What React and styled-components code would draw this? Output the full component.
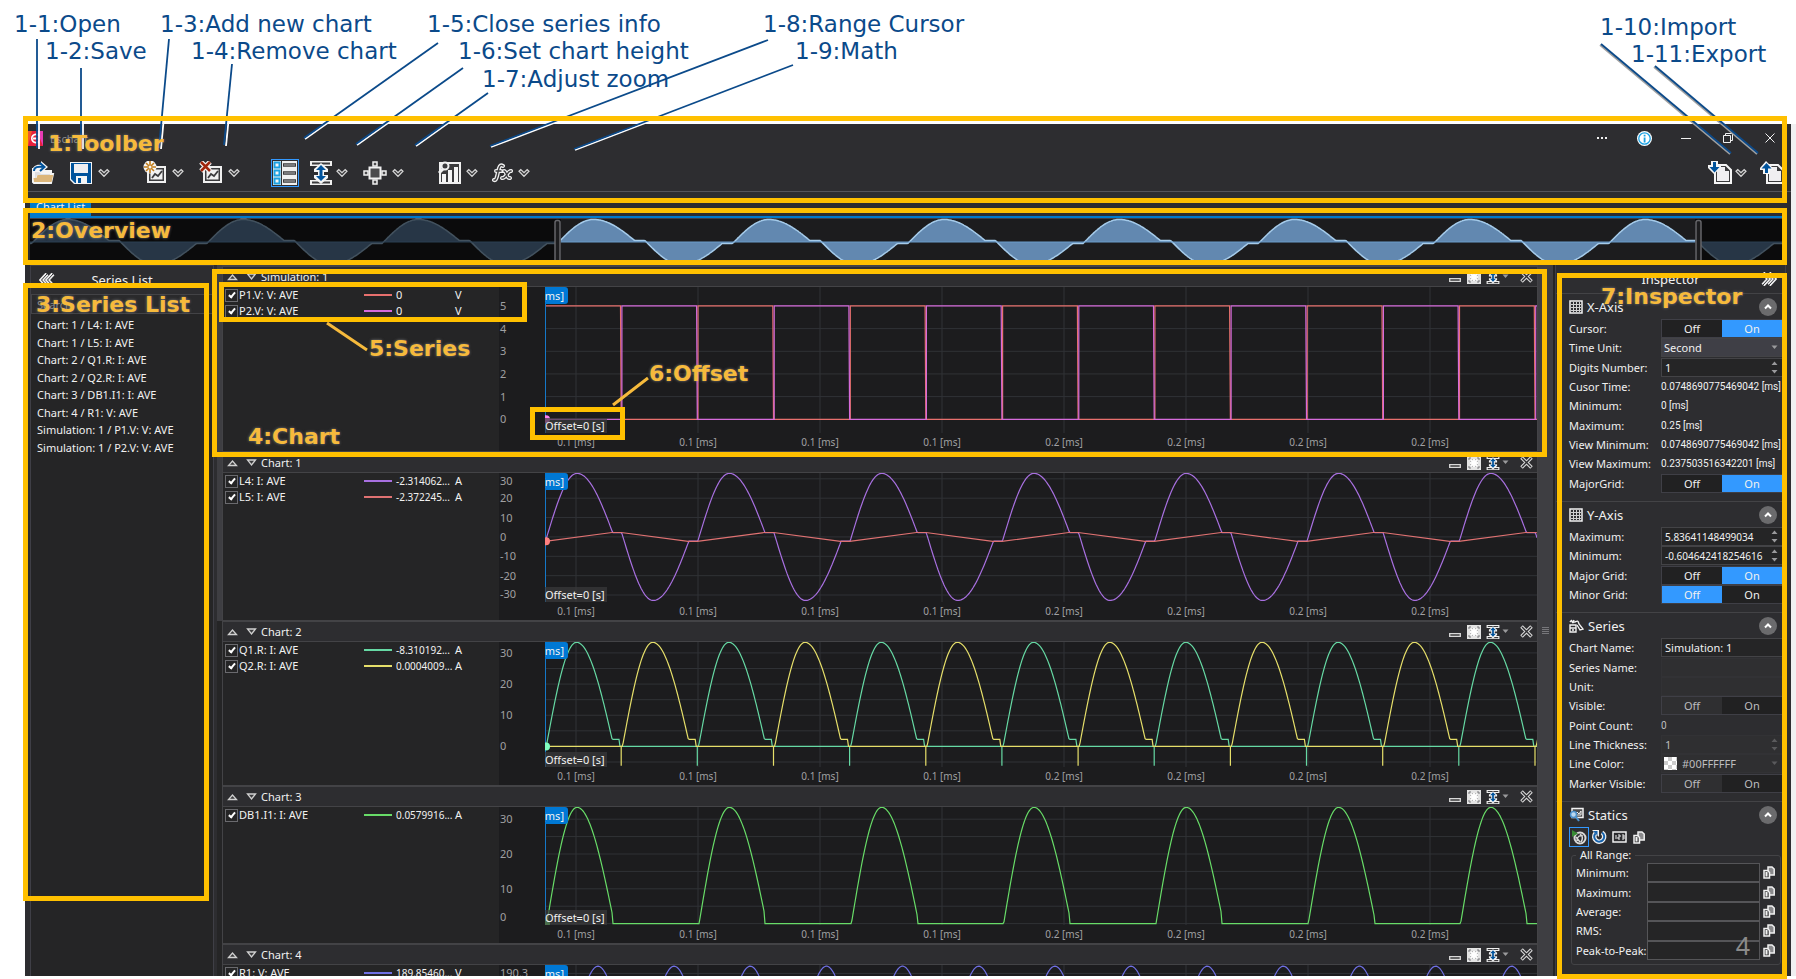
import { useId } from 'react';
import styled, { createGlobalStyle } from 'styled-components';

const uiFont = "'Noto Sans', 'Open Sans', sans-serif";
const noteFont = "'DejaVu Sans', 'Noto Sans', sans-serif";

const GlobalStyle = createGlobalStyle`
  * {
    box-sizing: border-box;
  }

  body {
    margin: 0;
    background: #fff;
    font-family: ${uiFont};
    font-size: 11px;
    color: #f1f1f1;
  }

  button, input, select {
    font: inherit;
    color: inherit;
  }
`;

const Page = styled.div`
  position: relative;
  height: 100vh;
  min-height: 600px;
  padding: 124px 5px 3px 25px;
  overflow: hidden;
`;

const AppWindow = styled.div`
  display: flex;
  flex-direction: column;
  height: 100%;
  background: #2d2d30;
  box-shadow: 5px 0 0 #f0f0f1;
`;

/* ---------- title bar and toolbar ---------- */

const TitleBar = styled.header`
  display: flex;
  align-items: center;
  height: 28px;
  flex: none;
  padding-left: 3px;
`;

const AppTitle = styled.span`
  margin-left: 7px;
  color: #8a8a8c;
`;

const CaptionButtons = styled.div`
  display: flex;
  margin-left: auto;
`;

const CaptionButton = styled.button`
  display: grid;
  place-items: center;
  width: 42px;
  height: 28px;
  padding: 0;
  border: none;
  background: none;
`;

const Toolbar = styled.div`
  display: flex;
  align-items: center;
  gap: 28px;
  height: 40px;
  flex: none;
  padding: 3px 5px 0 4px;
  border-bottom: 1px solid #55555a;
`;

const ToolGroup = styled.div`
  display: flex;
  align-items: center;
  gap: ${props => props.$gap || 10}px;
  margin-left: ${props => (props.$end ? 'auto' : '0')};
`;

const Tool = styled.div`
  display: flex;
  align-items: center;
`;

const ToolButton = styled.button`
  display: grid;
  place-items: center;
  width: ${props => (props.$slim ? 24 : 28)}px;
  height: 28px;
  padding: 0;
  border: ${props => (props.$active ? '1px solid #3399ff' : 'none')};
  background: none;
`;

const DropButton = styled.button`
  display: grid;
  place-items: center;
  width: 18px;
  height: 28px;
  padding: 0;
  border: none;
  background: none;
`;

const TabStrip = styled.div`
  display: flex;
  align-items: flex-end;
  height: 26px;
  flex: none;
  margin: 0 6px 0 5px;
  border-bottom: 2px solid #007acc;
`;

const Tab = styled.button`
  height: 18px;
  padding: 0 6px;
  border: none;
  background: #007acc;
  line-height: 18px;
`;

const OverviewStrip = styled.div`
  height: 47px;
  flex: none;
  margin: 0 6px 0 5px;

  svg {
    display: block;
    width: 100%;
    height: 100%;
  }
`;

/* ---------- main columns ---------- */

const Main = styled.main`
  display: grid;
  grid-template-columns: 184px 8px minmax(0, 1fr) 15px 2px 231px;
  flex: 1;
  min-height: 0;
  padding: 0 5px;
`;

const ListPanel = styled.aside`
  display: flex;
  flex-direction: column;
  border: 1px solid #3f3f46;
  border-bottom: none;
  background: #252526;
`;

const PanelHeader = styled.div`
  display: grid;
  grid-template-columns: 32px 1fr 32px;
  align-items: center;
  height: 28px;
  flex: none;
  background: #2d2d30;
  font-size: 13px;
  text-align: center;
`;

const PlainButton = styled.button`
  display: grid;
  place-items: center;
  padding: 0;
  border: none;
  background: none;
`;

const SearchBox = styled.input`
  height: 20px;
  flex: none;
  padding: 0 5px;
  border: 1px solid #434346;
  background: #2a2a2c;

  &::placeholder {
    color: #8a8a8c;
  }
`;

const SeriesItems = styled.ul`
  display: grid;
  grid-auto-rows: 1fr;
  height: 142px;
  margin: 0;
  padding: 2px 0 0 6px;
  list-style: none;
  align-items: center;
`;

const LeftTrack = styled.div`
  margin: 0 0 0 3px;
  background: linear-gradient(#3e3e42 50%, #252526 50%);
`;

const RightTrack = styled.div`
  display: grid;
  place-items: center;
  padding-top: 20px;
  background: #3e3e42;
`;

const Gutter = styled.div`
  background: #252526;
`;

/* ---------- charts ---------- */

const ChartStack = styled.section`
  overflow: hidden;
  border: solid #434346;
  border-width: 0 1px;
`;

const ChartHeader = styled.div`
  display: flex;
  align-items: center;
  height: 22px;
  border-top: 2px solid #434346;
  border-bottom: 1px solid #434346;
  background: #2d2d30;
`;

const HeaderButton = styled(PlainButton)`
  width: ${props => props.$width || 19}px;
  height: 18px;
`;

const CloseButton = styled(PlainButton)`
  justify-items: end;
  width: 28px;
  height: 18px;
  padding-right: 4px;
`;

const ChartName = styled.span`
  flex: 1;
`;

const ChartBody = styled.div`
  display: grid;
  grid-template-columns: 276px 46px minmax(0, 1fr);
  height: ${props => props.$height}px;
  background: #1c1c1e;
`;

const Legend = styled.div`
  padding: 0 0 0 2px;
  background: #252526;
`;

const LegendRow = styled.label`
  display: grid;
  grid-template-columns: 14px 125px 28px 63px 1fr;
  align-items: center;
  height: 16px;
  line-height: 16px;
`;

const LegendName = styled.span`
  white-space: nowrap;
`;

const LegendValue = styled.span`
  padding-left: 4px;
  font-size: ${props => (props.$long ? 10 : 11)}px;
  white-space: nowrap;
`;

const Swatch = styled.span`
  height: 2px;
  background: ${props => props.$color};
`;

const Check = styled.input`
  appearance: none;
  display: grid;
  place-content: center;
  width: 13px;
  height: 13px;
  margin: 0;
  border: 1px solid #6a6a6e;
  background: #252526;

  &:checked::after {
    content: '';
    width: 2px;
    height: 5px;
    margin-bottom: 2px;
    border: solid #fff;
    border-width: 0 2px 2px 0;
    transform: rotate(40deg);
  }
`;

const YAxis = styled.div`
  position: relative;
  color: #a0a0a2;
`;

const YTick = styled.span`
  position: absolute;
  left: 1px;
  line-height: 16px;
  transform: translateY(-50%);
`;

const PlotColumn = styled.div`
  display: grid;
  grid-template-rows: minmax(0, 1fr) 18px;
`;

const Plot = styled.div`
  position: relative;
  min-height: 0;

  svg {
    display: block;
    width: 100%;
    height: 100%;
  }

  path, line {
    vector-effect: non-scaling-stroke;
  }
`;

const XAxis = styled.div`
  position: relative;
  color: #a0a0a2;
`;

const XTick = styled.span`
  position: absolute;
  top: 1px;
  font-size: 10px;
  line-height: 16px;
  white-space: nowrap;
  transform: translateX(-50%);
`;

const CursorBadge = styled.span`
  position: absolute;
  top: 0;
  left: 0;
  display: flex;
  justify-content: flex-end;
  width: 23px;
  height: 17px;
  padding-right: 4px;
  overflow: hidden;
  border-radius: 0 3px 3px 0;
  background: #0078d4;
  line-height: 17px;
`;

const OffsetLabel = styled.span`
  position: absolute;
  bottom: 0;
  left: 0;
  padding-right: 2px;
  background: rgba(58, 58, 60, 0.7);
  line-height: 15px;
`;

/* ---------- inspector ---------- */

const Inspector = styled.aside`
  display: flex;
  flex-direction: column;
  border: solid #3f3f46;
  border-width: 0 1px;
  overflow: hidden;
`;

const Section = styled.section`
  padding: 0 2px 8px 13px;
  border-top: 1px solid #434346;
`;

const SectionTitle = styled.div`
  display: flex;
  align-items: center;
  gap: 4px;
  height: 25px;
  padding-right: 6px;

  h2 {
    flex: 1;
    margin: 0;
    font-size: 13px;
    font-weight: 400;
  }
`;

const Fields = styled.div`
  display: grid;
  grid-auto-rows: 1fr;
  height: ${props => props.$height}px;
`;

const Field = styled.div`
  display: grid;
  grid-template-columns: 92px minmax(0, 1fr);
  align-items: center;
  white-space: nowrap;
`;

const Readout = styled.output`
  font-family: Roboto, ${uiFont};
  font-size: 10px;
  color: ${props => (props.$dim ? '#bdbdbf' : '#f1f1f1')};
`;

const Toggle = styled.div`
  display: grid;
  grid-template-columns: 1fr 1fr;
  height: 19px;
  border: 1px solid #3f3f46;
`;

const ToggleButton = styled.button`
  padding: 0;
  border: none;
  background: ${props => (props.$on ? '#3399ff' : props.$muted ? '#2f2f31' : '#212122')};

  &:disabled {
    color: #bdbdbf;
  }
`;

const Editor = styled.div`
  display: flex;
  align-items: center;
  height: 19px;
  padding-right: 4px;
  border: 1px solid ${props => (props.$off ? '#323235' : '#434346')};
  background: ${props => (props.$off ? '#2f2f31' : props.$raised ? '#3f3f46' : '#252526')};
`;

const TextBox = styled.input`
  flex: 1;
  min-width: 0;
  height: 17px;
  padding: 0 3px;
  border: none;
  outline: none;
  background: none;
  font-size: ${props => (props.$digits ? 10 : 11)}px;

  &:disabled {
    color: #bdbdbf;
  }
`;

const Select = styled.select`
  appearance: none;
  flex: 1;
  min-width: 0;
  padding: 0 2px;
  border: none;
  background: none;

  &:disabled {
    color: #bdbdbf;
    opacity: 1;
  }
`;

const ColorChip = styled.span`
  width: 13px;
  height: 13px;
  margin: 0 3px 0 2px;
  background: conic-gradient(#ccc 25%, #fff 0 50%, #ccc 0 75%, #fff 0) 0 0 / 8px 8px;
`;

const StatTools = styled.div`
  display: flex;
  height: 19px;
`;

const StatButton = styled(PlainButton)`
  width: 20px;
  height: 20px;
  border: ${props => (props.$active ? '1px solid #3399ff' : 'none')};
`;

const RangeBox = styled.fieldset`
  margin: 1px 2px 0 2px;
  padding: 0 2px 4px 4px;
  border: 1px solid #434346;
  border-radius: 3px;

  legend {
    height: 16px;
    padding: 0 4px;
    line-height: 16px;
  }
`;

const StatRow = styled.div`
  display: grid;
  grid-template-columns: 71px minmax(0, 1fr) 18px;
  align-items: stretch;
  white-space: nowrap;

  label {
    align-self: center;
  }
`;

const StatBox = styled.input`
  width: 100%;
  min-width: 0;
  height: 100%;
  border: 1px solid #555558;
  background: #252526;
`;

/* ---------- annotations laid over the window ---------- */

const NoteLayer = styled.div`
  position: absolute;
  inset: 0;
  pointer-events: none;
`;

const NoteLines = styled.svg`
  position: absolute;
  top: 0;
  left: 0;
`;

const Frame = styled.div`
  position: absolute;
  border: 5px solid #ffc000;
`;

const Note = styled.span`
  position: absolute;
  color: #0b4a8a;
  font-family: ${noteFont};
  font-size: 23px;
  line-height: 30px;
  white-space: nowrap;
`;

const FrameNote = styled(Note)`
  color: #f6ba3c;
  font-size: 22px;
  font-weight: 700;
  text-shadow: 0 0 3px rgba(160, 160, 160, 0.7);
`;

const PageNumber = styled.span`
  position: absolute;
  color: #8b8b8b;
  font-size: 25px;
  line-height: 30px;
`;

/* ---------- icons ---------- */

const Chevron = () => (
  <svg width="12" height="10" viewBox="0 0 12 10">
    <path d="M1 3.200 2.800 1.500 6 4.700l3.200-3.200L11 3.200 6 8.500z" fill="#3b3b3d" stroke="#d8d8d8" strokeWidth="1.200" />
  </svg>
);

const AppLogo = () => (
  <svg width="15" height="15" viewBox="0 0 15 15">
    <rect width="15" height="15" fill="#e8203c" />
    <path d="M9 0h6v15z" fill="#e63bb4" />
    <path d="M0 0h4L0 15z" fill="#f0582c" />
    <path d="M10.500 4.500a4 4 0 1 0 0 6M5 7.500h5" stroke="#fff" strokeWidth="1.800" fill="none" />
  </svg>
);

const OpenIcon = () => (
  <svg width="24" height="24" viewBox="0 0 24 24">
    <path d="M2 21V8h7l2 2h9v3h2l-2 9H3z" fill="#f5f5f5" stroke="#f5f5f5" strokeWidth="2" />
    <path d="M4 19V11h4l2 2h9v1H6z" fill="#dedee0" />
    <path d="m3 21-.500-4h3l1-3H22v1l-1.500 6z" fill="#dcb67a" />
    <path d="M1 11c0-6 5-8 9-7V0l7 6-7 6V8C7 7 4 8 3 11z" fill="#f5f5f5" />
    <path d="M3 10C3 6 7 5 13 6m-4-4 4.500 4L9 10" stroke="#00539c" strokeWidth="2" fill="none" />
  </svg>
);

const SaveIcon = () => (
  <svg width="24" height="24" viewBox="0 0 24 24">
    <path d="M1 1h22v22H5l-4-4z" fill="#f5f5f5" />
    <path d="M2 2h20v20H6l-4-4z" fill="#00539c" />
    <path d="M5 3h14v9H5z" fill="#f0eff1" />
    <path d="M7 15h11v7H7z" fill="#f5f5f5" />
    <path d="M9 17h3v5H9z" fill="#00539c" />
  </svg>
);

const PictureFrame = () => (
  <>
    <path d="M4 5h19v17H4z" fill="#f0f0f0" />
    <path d="M6 7h15v13H6z" fill="#3b3b3d" />
    <path d="M7.500 8.500h12v10h-12z" fill="#f0f0f0" />
    <path d="m9 17 3-4 3 2 4-5" stroke="#3b3b3d" strokeWidth="1.800" fill="none" />
  </>
);

const AddChartIcon = () => (
  <svg width="24" height="24" viewBox="0 0 24 24">
    <PictureFrame />
    <circle cx="7" cy="6" r="6.500" fill="#f5f5f5" />
    <path d="M7 0v12M1 6h12M3 2l8 8M11 2l-8 8" stroke="#c27d1a" strokeWidth="1.600" />
    <circle cx="7" cy="6" r="1.500" fill="#f5f5f5" />
  </svg>
);

const RemoveChartIcon = () => (
  <svg width="24" height="24" viewBox="0 0 24 24">
    <PictureFrame />
    <path d="m2 1 9 9M11 1l-9 9" stroke="#f5f5f5" strokeWidth="5" />
    <path d="m2 1 9 9M11 1l-9 9" stroke="#a1260d" strokeWidth="2.500" />
  </svg>
);

const ListIcon = () => (
  <svg width="24" height="24" viewBox="0 0 24 24">
    <path d="M0 0h8v24H0z" fill="#f0f0f0" />
    {[1, 9, 17].map(y => (
      <g key={y}>
        <rect x="1.500" y={y + 0.5} width="5" height="5" fill="#f5f5f5" stroke="#1ba1e2" strokeWidth="2" />
        <rect x="9" y={y - 1} width="15" height="8" fill="#f0f0f0" />
        <path d={`M10 ${y + 3}h13`} stroke="#3b3b3d" strokeWidth="3.500" />
        <path d={`M11 ${y + 3}h11`} stroke="#b8b8ba" strokeWidth="1" />
      </g>
    ))}
  </svg>
);

const HeightIcon = ({ size = 24 }) => (
  <svg width={size} height={size} viewBox="0 0 24 24">
    <path d="M1 0h22v5H1zM1 19h22v5H1z" fill="#f0f0f0" />
    <path d="M3 2.500h18M3 21.500h18" stroke="#3b3b3d" strokeWidth="2" />
    <path d="M12 2 5 8v3h4v3H5v3l7 6 7-6v-3h-4v-3h4V8z" fill="#f5f5f5" />
    <path d="m12 4-5 5h3.500v6H7l5 5 5-5h-3.500V9H17z" fill="#00539c" />
  </svg>
);

const ZoomIcon = () => (
  <svg width="24" height="24" viewBox="0 0 24 24">
    <rect x="6.500" y="6.500" width="11" height="11" fill="#4b4b4d" stroke="#f0f0f0" strokeWidth="2" />
    <path
      d="M10 1h4v4h-4zM10 19h4v4h-4zM1 10h4v4H1zM19 10h4v4h-4z"
      fill="#4b4b4d"
      stroke="#f0f0f0"
      strokeWidth="1.500"
    />
  </svg>
);

const RangeIcon = () => (
  <svg width="24" height="24" viewBox="0 0 24 24">
    <path d="M3 2h20v20H3z" fill="#3b3b3d" stroke="#f0f0f0" strokeWidth="2" />
    <path d="M5 13h4v8H5zM11 9h4v12h-4zM17 6h4v15h-4z" fill="#f5f5f5" />
    <circle cx="8" cy="5" r="3.500" fill="#3b3b3d" stroke="#f0f0f0" strokeWidth="2" />
    <path d="m6 8-4 4" stroke="#f0f0f0" strokeWidth="3" />
  </svg>
);

const FxIcon = () => (
  <svg width="22" height="20" viewBox="0 0 22 20" fill="none" strokeLinecap="round">
    <g stroke="#f0f0f0" strokeWidth="4">
      <path d="M11 3c-3-2-4 1-5 6s-2 9-4 8M4 8h5M12 8c3 0 2 8 6 7M19 8c-3-1-5 8-9 7" />
    </g>
    <path
      d="M11 3c-3-2-4 1-5 6s-2 9-4 8M4 8h5M12 8c3 0 2 8 6 7M19 8c-3-1-5 8-9 7"
      stroke="#3b3b3d"
      strokeWidth="1.400"
    />
  </svg>
);

const DocIcon = ({ up }) => (
  <svg width="24" height="24" viewBox="0 0 24 24">
    <path d="M7 4h11l5 5v13H7z" fill="#3b3b3d" stroke="#f5f5f5" strokeWidth="2" />
    <path d="M9 6h8v4h4v10H9z" fill="#f0eff1" />
    <path d={up ? 'M6 0 0 7v2h3v4h7V9h3V7z' : 'M6 13 0 7V4h3V0h7v4h3v3z'} fill="#f5f5f5" />
    <path d={up ? 'm6.500 2-5 5.500H5V12h3V7.500h3.500z' : 'm6.500 11.500-5-5.500H5V1h3v5h3.500z'} fill="#00539c" />
  </svg>
);

const DoubleArrow = ({ flip }) => (
  <svg width="16" height="14" viewBox="0 0 16 14" fill="none">
    <g transform={flip ? 'matrix(-1 0 0 1 16 0)' : undefined}>
      <path d="M8 1 2.500 7 8 13M14 1 8.500 7 14 13" stroke="#f1f1f1" strokeWidth="4" />
      <path d="M8 1 2.500 7 8 13M14 1 8.500 7 14 13" stroke="#2d2d30" strokeWidth="1" />
    </g>
  </svg>
);

const Triangle = ({ down }) => (
  <svg width="11" height="8" viewBox="0 0 11 8">
    <path d={down ? 'M1.500 1h8l-4 5z' : 'M1.500 6.500h8l-4-4.500z'} fill="#3b3b3d" stroke="#d0d0d0" strokeWidth="1.300" />
  </svg>
);

const MinimiseIcon = () => (
  <svg width="12" height="12" viewBox="0 0 12 12">
    <path d="M.7 7.700h10.600v2.600H.7z" fill="#3b3b3d" stroke="#d8d8d8" strokeWidth="1.300" />
  </svg>
);

const FitIcon = () => (
  <svg width="14" height="14" viewBox="0 0 14 14">
    <path d="M0 0h14v14H0z" fill="#e4e4e4" />
    <path d="M2 4V2h2M10 2h2v2M12 10v2h-2M4 12H2v-2" stroke="#77777a" fill="none" />
    <path d="M7 3v8M3 7h8M4 4l6 6M10 4l-6 6" stroke="#fff" strokeWidth="1.600" />
    <path d="M5 3.500h.5M8.500 3.500H9M5 10.500h.5M8.500 10.500H9M3.500 5v.5M10.500 5v.5M3.500 8.500V9M10.500 8.500V9" stroke="#8a8a8c" />
  </svg>
);

const CloseIcon = () => (
  <svg width="13" height="13" viewBox="0 0 13 13">
    <path d="m1.500 1.500 10 10M11.500 1.500l-10 10" stroke="#d8d8d8" strokeWidth="3.600" />
    <path d="m2 2 9 9M11 2l-9 9" stroke="#2d2d30" strokeWidth="1.300" />
  </svg>
);

const GridIcon = () => (
  <svg width="14" height="14" viewBox="0 0 14 14" fill="none">
    <path d="M1 1h12v12H1z" stroke="#f1f1f1" strokeWidth="1.500" />
    <path d="M4.500 2v10M7.500 2v10M10.500 2v10M2 4.500h10M2 7.500h10M2 10.500h10" stroke="#d0d0d0" />
  </svg>
);

const SeriesIcon = () => (
  <svg width="15" height="14" viewBox="0 0 15 14" fill="none">
    <path d="M1 6h6v3H1zM1 9h6v4H1zM3 11h2" stroke="#f1f1f1" strokeWidth="1.400" />
    <path d="M1 3c2-3 3 1 5 0s3-2 4 2l4 5-3 1-3-5M2 1l2 3M5 1 4 4" stroke="#f1f1f1" strokeWidth="1.400" />
  </svg>
);

const StaticsIcon = () => (
  <svg width="15" height="15" viewBox="0 0 15 15" fill="none">
    <path d="M3 1.500h11v9H3z" fill="#4b4b4d" stroke="#f1f1f1" strokeWidth="1.500" />
    <path d="m6 8 2-3 2 2 2-3v4z" stroke="#f1f1f1" />
    <circle cx="4.500" cy="7.500" r="3" fill="#bcd7ee" stroke="#4a8fcc" strokeWidth="1.500" />
    <path d="m7 10 3 4" stroke="#4a8fcc" strokeWidth="2" />
  </svg>
);

const CollapseIcon = () => (
  <svg width="18" height="18" viewBox="0 0 18 18">
    <circle cx="9" cy="9" r="9" fill="#6b6b6d" />
    <path d="m6 10.500 3-3 3 3" stroke="#fff" strokeWidth="2" fill="none" />
  </svg>
);

const CopyIcon = () => (
  <svg width="12" height="13" viewBox="0 0 12 13" strokeWidth="1.500">
    <path d="M5 1h4l2.200 2v6H5z" fill="#8a8a8c" stroke="#f1f1f1" />
    <path d="M1 4.500h3.500l2 2V12H1z" fill="#3b3b3d" stroke="#f1f1f1" />
    <path d="M2.500 6h2v4.500h-2z" fill="#f1f1f1" />
  </svg>
);

const AutoIcon = () => (
  <svg width="16" height="16" viewBox="0 0 16 16" fill="none">
    <circle cx="9" cy="9" r="5.500" stroke="#d8d8d8" strokeWidth="2" />
    <path d="M6 12c0-5 3-6 6-5M9 5c3 2 3 5 1 8M5 8l4 5" stroke="#d8d8d8" strokeWidth="1.500" />
    <path d="m1 1 6 3.500L1 8z" fill="#388a34" />
  </svg>
);

const RefreshIcon = () => (
  <svg width="16" height="16" viewBox="0 0 16 16" fill="none">
    <path d="M11 3.500a5 5 0 1 1-6.500.8" stroke="#f1f1f1" strokeWidth="4.500" />
    <path d="M1 1h7v7z" fill="#f1f1f1" />
    <path d="M11 3.500a5 5 0 1 1-6.500.8" stroke="#1763ad" strokeWidth="2" />
    <path d="M2 2h4.500v4.500z" fill="#1763ad" />
  </svg>
);

const NumberIcon = () => (
  <svg width="15" height="12" viewBox="0 0 15 12" fill="none">
    <path d="M1 1h13v10H1z" stroke="#f1f1f1" strokeWidth="1.500" />
    <path d="M4 4v4M6 4h2v2H6v2h2M10 4h2v4h-2M10 6h2" stroke="#f1f1f1" />
  </svg>
);

const Spinner = ({ dim }) => (
  <svg width="7" height="13" viewBox="0 0 7 13" fill={dim ? '#5a5a5c' : '#9a9a9c'}>
    <path d="M.5 4h6l-3-3.500zM.5 9h6l-3 3.500z" />
  </svg>
);

const Caret = ({ dim }) => (
  <svg width="7" height="5" viewBox="0 0 7 5" fill={dim ? '#5a5a5c' : '#9a9a9c'}>
    <path d="M.5.5h6l-3 3.500z" />
  </svg>
);

/* ---------- signal data ---------- */

// One half cycle of the inductor current: a lobe and then a short flat part
function halfWave(u) {
  if (u < 0.414) return Math.cos(((0.414 - u) / 0.397) * (Math.PI / 2));
  if (u < 0.88) return Math.cos(((u - 0.414) / 0.489) * (Math.PI / 2));
  return 0.068;
}

function fullWave(t) {
  const p = ((t % 1) + 1) % 1;
  return p < 0.5 ? halfWave(p * 2) : -halfWave(p * 2 - 1);
}

const PLOT_WIDTH = 992;
const PERIOD = 152.3;
const HALF = PERIOD / 2;

const toPath = points => 'M' + points.map(([x, y]) => `${x.toFixed(1)} ${y.toFixed(1)}`).join('L');

function sample(fn, width = PLOT_WIDTH) {
  const points = [];
  for (let x = 0; x <= width; x += 1) points.push([x, fn(x)]);
  return points;
}

function square(phase) {
  const points = [];
  for (let i = 0; i <= 13; i += 1) {
    const high = (i + phase) % 2 === 0;
    const start = i * HALF + (high && i > 0 ? 0.7 : 0);
    points.push([start, high ? 5 : 0], [(i + 1) * HALF - (high ? 0.7 : -0.7), high ? 5 : 0]);
  }
  return points;
}

function triangle() {
  const points = [[0, -2.3]];
  for (let i = 0; i < 14; i += 1) {
    const v = i % 2 ? -2.3 : 2.3;
    points.push([i * HALF + 67, v], [(i + 1) * HALF, v]);
  }
  return points;
}

function pulsed(phase) {
  const points = [];
  for (let i = 0; i < 14; i += 1) {
    const x0 = i * HALF;
    if ((i + phase) % 2 === 0) {
      if (i > 0) points.push([x0, 0], [x0, -6.2], [x0, 0]);
      for (let s = 1; s < 75; s += 1) points.push([x0 + s, Math.max(0, 33.4 * halfWave(s / HALF))]);
      points.push([x0 + 75, 0]);
    } else {
      points.push([x0, 0], [x0 + HALF - 1, 0]);
    }
  }
  return points;
}

function rectified() {
  return sample(x => {
    const p = (x - 0.5) % PERIOD;
    return p < 67 && p > 0 ? Math.max(0, 33.4 * halfWave(p / HALF)) : 0;
  });
}

const range = (from, to, step) => {
  const out = [];
  for (let v = from; v <= to; v += step) out.push(v);
  return out;
};

const charts = [
  {
    name: 'Simulation: 1',
    height: 164,
    max: 5.836,
    min: -0.605,
    ticks: [5, 4, 3, 2, 1, 0],
    grid: range(0, 5, 1),
    marker: ['#ff80f0', 0],
    series: [
      { name: 'P1.V: V: AVE', value: '0', unit: 'V', color: '#e8706e', points: square(0) },
      { name: 'P2.V: V: AVE', value: '0', unit: 'V', color: '#d66bdc', points: square(1) },
    ],
  },
  {
    name: 'Chart: 1',
    height: 147,
    max: 33,
    min: -33.6,
    ticks: [30, 20, 10, 0, -10, -20, -30],
    grid: range(-30, 30, 10),
    marker: ['#ff8080', -2.3],
    series: [
      {
        name: 'L4: I: AVE',
        value: '-2.314062...',
        unit: 'A',
        color: '#a870e0',
        points: sample(x => 32.8 * fullWave((x - 0.5) / PERIOD)),
      },
      { name: 'L5: I: AVE', value: '-2.372245...', unit: 'A', color: '#e07272', points: triangle() },
    ],
  },
  {
    name: 'Chart: 2',
    height: 143,
    max: 33.5,
    min: -6.6,
    ticks: [30, 20, 10, 0],
    grid: range(-5, 30, 5),
    marker: ['#80ffc0', 0],
    series: [
      { name: 'Q1.R: I: AVE', value: '-8.310192...', unit: 'A', color: '#66d9a4', points: pulsed(0) },
      { name: 'Q2.R: I: AVE', value: '0.0004009...', unit: 'A', color: '#e6df6a', points: pulsed(1) },
    ],
  },
  {
    name: 'Chart: 3',
    height: 136,
    max: 33.5,
    min: -0.4,
    ticks: [30, 20, 10, 0],
    grid: range(0, 30, 5),
    marker: ['#6ee86e', 0],
    series: [{ name: 'DB1.I1: I: AVE', value: '0.0579916...', unit: 'A', color: '#68dc68', points: rectified() }],
  },
  {
    name: 'Chart: 4',
    height: 150,
    max: 191,
    min: 180,
    ticks: [190.3],
    grid: [190.3],
    marker: ['#8080ff', 180],
    series: [
      {
        name: 'R1: V: AVE',
        value: '189.85460...',
        unit: 'V',
        color: '#7070e4',
        points: sample(x => 187.6 + 3.3 * Math.cos(((x - 53) / HALF) * 2 * Math.PI)),
      },
    ],
  },
];

const xTicks = ['0.1', '0.1', '0.1', '0.1', '0.2', '0.2', '0.2', '0.2'].map((text, i) => ({
  text: `${text} [ms]`,
  x: 31 + i * 122,
}));

const seriesItems = [
  'Chart: 1 / L4: I: AVE',
  'Chart: 1 / L5: I: AVE',
  'Chart: 2 / Q1.R: I: AVE',
  'Chart: 2 / Q2.R: I: AVE',
  'Chart: 3 / DB1.I1: I: AVE',
  'Chart: 4 / R1: V: AVE',
  'Simulation: 1 / P1.V: V: AVE',
  'Simulation: 1 / P2.V: V: AVE',
];

/* ---------- components ---------- */

function ToolItem({ label, slim, active, drop, children }) {
  return (
    <Tool>
      <ToolButton type="button" aria-label={label} $slim={slim} $active={active}>
        {children}
      </ToolButton>
      {drop && (
        <DropButton type="button" aria-label={`${label} options`}>
          <Chevron />
        </DropButton>
      )}
    </Tool>
  );
}

function Overview() {
  const wave = toPath(sample(x => 24 - 22.5 * fullWave((x - 1.5) / 175.25), 1755));
  const area = `${wave}L1755 24L0 24Z`;
  return (
    <OverviewStrip>
      <svg viewBox="0 0 1755 47" preserveAspectRatio="none">
        <rect width="1755" height="47" fill="#1c1c1e" />
        <path d="M0 .5h1755" stroke="#3f3f46" />
        <path d={area} fill="#6288b0" />
        <path d={wave} fill="none" stroke="#a5cbea" strokeWidth="1.500" />
        <path d="M0 24h1755" stroke="#6a9cca" strokeWidth="1" />
        <path d="M0 1h531v46H0zM1665 1h90v46h-90z" fill="#000" fillOpacity="0.6" />
        {[525, 1666].map(x => (
          <rect key={x} x={x} y="2.500" width="5" height="50" rx="2" fill="#1c1c1e" stroke="#66666a" strokeWidth="1.500" />
        ))}
      </svg>
    </OverviewStrip>
  );
}

function ChartView({ chart }) {
  const h = chart.height - 18;
  const toY = v => ((chart.max - v) / (chart.max - chart.min)) * h;
  return (
    <article>
      <ChartHeader>
        <HeaderButton type="button" aria-label="Move up">
          <Triangle />
        </HeaderButton>
        <HeaderButton type="button" aria-label="Move down">
          <Triangle down />
        </HeaderButton>
        <ChartName>{chart.name}</ChartName>
        <HeaderButton type="button" aria-label="Minimise">
          <MinimiseIcon />
        </HeaderButton>
        <HeaderButton type="button" aria-label="Fit">
          <FitIcon />
        </HeaderButton>
        <HeaderButton type="button" aria-label="Height">
          <HeightIcon size={14} />
        </HeaderButton>
        <HeaderButton type="button" aria-label="Height options" $width={7}>
          <Caret />
        </HeaderButton>
        <CloseButton type="button" aria-label="Close chart">
          <CloseIcon />
        </CloseButton>
      </ChartHeader>
      <ChartBody $height={chart.height}>
        <Legend>
          {chart.series.map(s => (
            <LegendRow key={s.name}>
              <Check type="checkbox" defaultChecked />
              <LegendName>{s.name}</LegendName>
              <Swatch $color={s.color} />
              <LegendValue $long={s.value.length > 3}>{s.value}</LegendValue>
              <span>{s.unit}</span>
            </LegendRow>
          ))}
        </Legend>
        <YAxis>
          {chart.ticks.map(t => (
            <YTick key={t} style={{ top: Math.min(Math.max(toY(t), 8), h - 8) }}>
              {t}
            </YTick>
          ))}
        </YAxis>
        <PlotColumn>
          <Plot>
            <svg viewBox={`0 0 ${PLOT_WIDTH} ${h}`} preserveAspectRatio="none">
              {xTicks.map(t => (
                <line key={t.x} x1={t.x} x2={t.x} y1="0" y2={h} stroke="#303236" />
              ))}
              {chart.grid.map(v => (
                <line key={v} x1="0" x2={PLOT_WIDTH} y1={toY(v)} y2={toY(v)} stroke="#303236" />
              ))}
              {chart.series.map(s => (
                <path
                  key={s.name}
                  d={toPath(s.points.map(([x, v]) => [x, toY(v)]))}
                  fill="none"
                  stroke={s.color}
                  strokeWidth="1.200"
                />
              ))}
              <line x1="0.500" x2="0.500" y1="0" y2={h} stroke="#1578c8" />
              <circle cx="1" cy={toY(chart.marker[1])} r="4" fill={chart.marker[0]} />
            </svg>
            <CursorBadge>[ms]</CursorBadge>
            <OffsetLabel>Offset=0 [s]</OffsetLabel>
          </Plot>
          <XAxis>
            {xTicks.map(t => (
              <XTick key={t.x} style={{ left: `${(t.x / PLOT_WIDTH) * 100}%` }}>
                {t.text}
              </XTick>
            ))}
          </XAxis>
        </PlotColumn>
      </ChartBody>
    </article>
  );
}

function ToggleField({ label, value, disabled }) {
  return (
    <Field>
      <span>{label}</span>
      <Toggle role="group" aria-label={label}>
        {['Off', 'On'].map(option => (
          <ToggleButton
            key={option}
            type="button"
            aria-pressed={value === option}
            disabled={disabled}
            $on={!disabled && value === option}
            $muted={disabled && value === option}
          >
            {option}
          </ToggleButton>
        ))}
      </Toggle>
    </Field>
  );
}

function TextField({ label, value = '', spin, disabled, digits }) {
  const id = useId();
  return (
    <Field>
      <label htmlFor={id}>{label}</label>
      <Editor $off={disabled}>
        <TextBox id={id} defaultValue={value} disabled={disabled} $digits={digits} />
        {spin && <Spinner dim={disabled} />}
      </Editor>
    </Field>
  );
}

function ReadoutField({ label, value, dim }) {
  return (
    <Field>
      <span>{label}</span>
      <Readout $dim={dim}>{value}</Readout>
    </Field>
  );
}

function SelectField({ label, value, chip, disabled }) {
  const id = useId();
  return (
    <Field>
      <label htmlFor={id}>{label}</label>
      <Editor $off={disabled} $raised={!disabled}>
        {chip && <ColorChip />}
        <Select id={id} disabled={disabled} defaultValue={value}>
          <option>{value}</option>
        </Select>
        <Caret dim={disabled} />
      </Editor>
    </Field>
  );
}

function SectionHead({ icon, title }) {
  return (
    <SectionTitle>
      {icon}
      <h2>{title}</h2>
      <PlainButton type="button" aria-label={`Collapse ${title}`}>
        <CollapseIcon />
      </PlainButton>
    </SectionTitle>
  );
}

function StatField({ label }) {
  const id = useId();
  return (
    <StatRow>
      <label htmlFor={id}>{label}</label>
      <StatBox id={id} readOnly />
      <PlainButton type="button" aria-label={`Copy ${label}`}>
        <CopyIcon />
      </PlainButton>
    </StatRow>
  );
}

function InspectorPanel() {
  return (
    <Inspector>
      <PanelHeader>
        <span />
        <span>Inspector</span>
        <PlainButton type="button" aria-label="Close inspector">
          <DoubleArrow flip />
        </PlainButton>
      </PanelHeader>
      <Section>
        <SectionHead icon={<GridIcon />} title="X-Axis" />
        <Fields $height={174}>
          <ToggleField label="Cursor:" value="On" />
          <SelectField label="Time Unit:" value="Second" />
          <TextField label="Digits Number:" value="1" spin />
          <ReadoutField label="Cusor Time:" value="0.0748690775469042 [ms]" />
          <ReadoutField label="Minimum:" value="0 [ms]" />
          <ReadoutField label="Maximum:" value="0.25 [ms]" />
          <ReadoutField label="View Minimum:" value="0.0748690775469042 [ms]" />
          <ReadoutField label="View Maximum:" value="0.237503516342201 [ms]" />
          <ToggleField label="MajorGrid:" value="On" />
        </Fields>
      </Section>
      <Section>
        <SectionHead icon={<GridIcon />} title="Y-Axis" />
        <Fields $height={77}>
          <TextField label="Maximum:" value="5.83641148499034" spin digits />
          <TextField label="Minimum:" value="-0.604642418254616" spin digits />
          <ToggleField label="Major Grid:" value="On" />
          <ToggleField label="Minor Grid:" value="Off" />
        </Fields>
      </Section>
      <Section>
        <SectionHead icon={<SeriesIcon />} title="Series" />
        <Fields $height={155}>
          <TextField label="Chart Name:" value="Simulation: 1" />
          <TextField label="Series Name:" disabled />
          <TextField label="Unit:" disabled />
          <ToggleField label="Visible:" value="Off" disabled />
          <ReadoutField label="Point Count:" value="0" dim />
          <TextField label="Line Thickness:" value="1" spin disabled />
          <SelectField label="Line Color:" value="#00FFFFFF" chip disabled />
          <ToggleField label="Marker Visible:" value="Off" disabled />
        </Fields>
      </Section>
      <Section>
        <SectionHead icon={<StaticsIcon />} title="Statics" />
        <StatTools>
          <StatButton type="button" aria-label="Auto update" $active>
            <AutoIcon />
          </StatButton>
          <StatButton type="button" aria-label="Refresh">
            <RefreshIcon />
          </StatButton>
          <StatButton type="button" aria-label="Number format">
            <NumberIcon />
          </StatButton>
          <StatButton type="button" aria-label="Copy all">
            <CopyIcon />
          </StatButton>
        </StatTools>
        <RangeBox>
          <legend>All Range:</legend>
          <Fields $height={97}>
            {['Minimum:', 'Maximum:', 'Average:', 'RMS:', 'Peak-to-Peak:'].map(label => (
              <StatField key={label} label={label} />
            ))}
          </Fields>
        </RangeBox>
      </Section>
    </Inspector>
  );
}

const toolNotes = [
  { text: '1-1:Open', left: 14, top: 9, line: [37, 39, 37, 148], shift: [2, 1] },
  { text: '1-2:Save', left: 45, top: 36, line: [81, 68, 81, 148], shift: [2, 1] },
  { text: '1-3:Add new chart', left: 160, top: 9, line: [169, 39, 159, 148], shift: [2, 1] },
  { text: '1-4:Remove chart', left: 191, top: 36, line: [232, 64, 224, 145], shift: [2, 1] },
  { text: '1-5:Close series info', left: 427, top: 9, line: [438, 43, 304, 138], shift: [1, 1] },
  { text: '1-6:Set chart height', left: 458, top: 36, line: [463, 68, 356, 144], shift: [1, 1] },
  { text: '1-7:Adjust zoom', left: 482, top: 64, line: [488, 93, 415, 145], shift: [1, 1] },
  { text: '1-8:Range Cursor', left: 763, top: 9, line: [768, 40, 490, 146], shift: [1, 1] },
  { text: '1-9:Math', left: 795, top: 36, line: [793, 65, 574, 149], shift: [1, 1] },
  { text: '1-10:Import', left: 1600, top: 12, line: [1601, 44, 1731, 153], shift: [-1, 1] },
  { text: '1-11:Export', left: 1631, top: 39, line: [1655, 66, 1758, 153], shift: [-1, 1] },
];

const frames = [
  { left: 23, right: 9, top: 116, height: 87 },
  { left: 23, right: 9, top: 208, height: 57 },
  { left: 23, width: 186, top: 283, height: 618 },
  { left: 212, right: 249, top: 269, height: 188 },
  { left: 219, width: 308, top: 282, height: 40 },
  { left: 530, width: 95, top: 407, height: 33 },
  { right: 9, width: 230, top: 273, bottom: 0 },
];

const frameNotes = [
  { text: '1:Toolber', left: 48, top: 129 },
  { text: '2:Overview', left: 31, top: 216 },
  { text: '3:Series List', left: 36, top: 290 },
  { text: '4:Chart', left: 248, top: 422 },
  { text: '5:Series', left: 369, top: 334 },
  { text: '6:Offset', left: 649, top: 359 },
  { text: '7:Inspector', left: 1601, top: 282 },
];

function Annotations() {
  return (
    <NoteLayer>
      <NoteLines width="1796" height="979" viewBox="0 0 1796 979">
        {toolNotes.map(({ text, line: [x1, y1, x2, y2], shift: [dx, dy] }) => (
          <g key={text} strokeWidth="1.800">
            <line x1={x1 + dx} y1={y1 + dy} x2={x2 + dx} y2={y2 + dy} stroke={dx < 0 ? '#a0a0a0' : '#fff'} />
            <line x1={x1} y1={y1} x2={x2} y2={y2} stroke="#0b4a8a" />
          </g>
        ))}
        <path d="M327 323 367 350M613 405 648 378" stroke="#f6ba3c" strokeWidth="3" />
      </NoteLines>
      {frames.map(frame => (
        <Frame key={`${frame.top}`} style={frame} />
      ))}
      {toolNotes.map(({ text, left, top }) => (
        <Note key={text} style={{ left, top }}>
          {text}
        </Note>
      ))}
      {frameNotes.map(({ text, left, top }) => (
        <FrameNote key={text} style={{ left, top }}>
          {text}
        </FrameNote>
      ))}
      <PageNumber style={{ right: 46, bottom: 19 }}>4</PageNumber>
    </NoteLayer>
  );
}

function App() {
  return (
    <Page>
      <GlobalStyle />
      <AppWindow>
        <TitleBar>
          <AppLogo />
          <AppTitle>Eschart</AppTitle>
          <CaptionButtons>
            <CaptionButton type="button" aria-label="More">
              <svg width="10" height="4" viewBox="0 0 10 4" fill="#f1f1f1">
                <path d="M0 1h2v2H0zM4 1h2v2H4zM8 1h2v2H8z" />
              </svg>
            </CaptionButton>
            <CaptionButton type="button" aria-label="About">
              <svg width="15" height="15" viewBox="0 0 15 15">
                <circle cx="7.500" cy="7.500" r="7.500" fill="#fff" />
                <circle cx="7.500" cy="7.500" r="5.700" fill="#fff" stroke="#1ba1e2" strokeWidth="1.300" />
                <path d="M6.700 6.500h1.800v5H6.700zM6.700 3.700h1.800v1.700H6.700z" fill="#1ba1e2" />
              </svg>
            </CaptionButton>
            <CaptionButton type="button" aria-label="Minimise window">
              <svg width="10" height="10" viewBox="0 0 10 10">
                <path d="M0 5.500h10" stroke="#f1f1f1" />
              </svg>
            </CaptionButton>
            <CaptionButton type="button" aria-label="Restore window">
              <svg width="10" height="10" viewBox="0 0 10 10" fill="none" stroke="#f1f1f1">
                <path d="M.5 2.500h7v7h-7zM2.500 2.500v-2h7v7h-2" />
              </svg>
            </CaptionButton>
            <CaptionButton type="button" aria-label="Close window">
              <svg width="10" height="10" viewBox="0 0 10 10">
                <path d="m.5.5 9 9M9.500.5l-9 9" stroke="#f1f1f1" />
              </svg>
            </CaptionButton>
          </CaptionButtons>
        </TitleBar>

        <Toolbar role="toolbar">
          <ToolGroup>
            <ToolItem label="Open">
              <OpenIcon />
            </ToolItem>
            <ToolItem label="Save" drop>
              <SaveIcon />
            </ToolItem>
          </ToolGroup>
          <ToolGroup>
            <ToolItem label="Add new chart" drop>
              <AddChartIcon />
            </ToolItem>
            <ToolItem label="Remove chart" drop>
              <RemoveChartIcon />
            </ToolItem>
          </ToolGroup>
          <ToolGroup>
            <ToolItem label="Close series info" active>
              <ListIcon />
            </ToolItem>
            <ToolItem label="Set chart height" slim drop>
              <HeightIcon />
            </ToolItem>
            <ToolItem label="Adjust zoom" drop>
              <ZoomIcon />
            </ToolItem>
          </ToolGroup>
          <ToolGroup>
            <ToolItem label="Range cursor" drop>
              <RangeIcon />
            </ToolItem>
            <ToolItem label="Math" slim drop>
              <FxIcon />
            </ToolItem>
          </ToolGroup>
          <ToolGroup $end $gap={8}>
            <ToolItem label="Import" slim drop>
              <DocIcon />
            </ToolItem>
            <ToolItem label="Export">
              <DocIcon up />
            </ToolItem>
          </ToolGroup>
        </Toolbar>

        <TabStrip>
          <Tab type="button">Chart List</Tab>
        </TabStrip>
        <Overview />

        <Main>
          <ListPanel>
            <PanelHeader>
              <PlainButton type="button" aria-label="Close series list">
                <DoubleArrow />
              </PlainButton>
              <span>Series List</span>
            </PanelHeader>
            <SearchBox placeholder="Search" aria-label="Search series" />
            <SeriesItems>
              {seriesItems.map(item => (
                <li key={item}>{item}</li>
              ))}
            </SeriesItems>
          </ListPanel>
          <LeftTrack />
          <ChartStack>
            {charts.map(chart => (
              <ChartView key={chart.name} chart={chart} />
            ))}
          </ChartStack>
          <RightTrack>
            <svg width="7" height="8" viewBox="0 0 7 8">
              <path d="M0 .5h7M0 2.500h7M0 4.500h7M0 6.500h7" stroke="#77777b" />
            </svg>
          </RightTrack>
          <Gutter />
          <InspectorPanel />
        </Main>
      </AppWindow>
      <Annotations />
    </Page>
  );
}

export default App;
